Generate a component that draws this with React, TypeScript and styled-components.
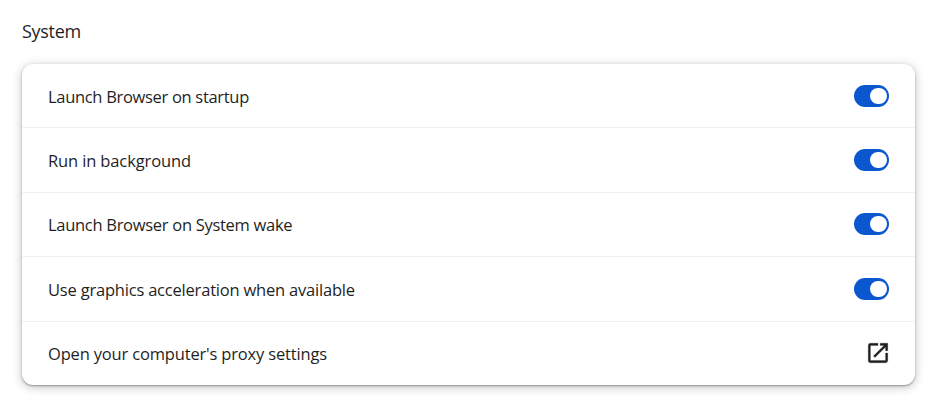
import React from "react";
import styled, { createGlobalStyle } from "styled-components";

const GlobalStyle = createGlobalStyle`
  * { box-sizing: border-box; }
  body { margin: 0; background: #fff; color: #1f1f1f; font-family: "Segoe UI", "Open Sans", "Noto Sans", sans-serif; }
`;

const Page = styled.main`
  height: 408px;
  padding: 19px 21px 0 22px;
`;

const Heading = styled.h2`
  margin: 0 0 20px;
  height: 25px;
  font-size: 18px;
  line-height: 25px;
  font-weight: 400;
  letter-spacing: -0.3px;
  white-space: nowrap;
`;

const Card = styled.section`
  display: grid;
  grid-template-rows: 64px 65px 64px 65px 63px;
  border-radius: 11px;
  background: #fff;
  box-shadow: 0 1px 2px rgba(0, 0, 0, 0.34), 0 2px 10px 1px rgba(0, 0, 0, 0.2);
`;

const Row = styled.div<{ $top?: number }>`
  display: flex;
  align-items: flex-start;
  justify-content: space-between;
  padding: ${(p) => p.$top ?? 21}px 26px 0;
  &:not(:last-child) { border-bottom: 1px solid #f0f0f0; }
`;

const Label = styled.span<{ $spacing: number }>`
  font-size: 16.5px;
  line-height: 23px;
  letter-spacing: ${(p) => p.$spacing}px;
  white-space: nowrap;
`;

const Toggle = styled.button`
  display: flex;
  justify-content: flex-end;
  align-items: center;
  width: 35px;
  height: 22px;
  padding: 0 2.5px;
  border: 0;
  border-radius: 11px;
  background: #0b57d0;
`;

const Knob = styled.span`
  width: 16.5px;
  height: 16.5px;
  border-radius: 50%;
  background: #fff;
`;

const OpenIcon = styled.svg`
  margin: -2px -2px 0 0;
`;

const settings = [
  { label: "Launch Browser on startup", spacing: -0.31, top: 21 },
  { label: "Run in background", spacing: -0.13, top: 21 },
  { label: "Launch Browser on System wake", spacing: -0.29, top: 20 },
  { label: "Use graphics acceleration when available", spacing: -0.2, top: 21 },
];

export default function App() {
  return (
    <Page>
      <GlobalStyle />
      <Heading>System</Heading>
      <Card>
        {settings.map((s) => (
          <Row key={s.label} $top={s.top}>
            <Label $spacing={s.spacing}>{s.label}</Label>
            <Toggle role="switch" aria-checked="true" aria-label={s.label}><Knob /></Toggle>
          </Row>
        ))}
        <Row $top={20}>
          <Label $spacing={-0.17}>Open your computer's proxy settings</Label>
          <OpenIcon width="26" height="26" viewBox="0 0 24 24" fill="#1f1f1f" stroke="#1f1f1f" strokeWidth="0.25">
            <path d="M19 19H5V5h7V3H5a2 2 0 0 0-2 2v14a2 2 0 0 0 2 2h14c1.1 0 2-.9 2-2v-7h-2v7zM14 3v2h3.59l-9.83 9.83 1.41 1.41L19 6.41V10h2V3h-7z" />
          </OpenIcon>
        </Row>
      </Card>
    </Page>
  );
}
